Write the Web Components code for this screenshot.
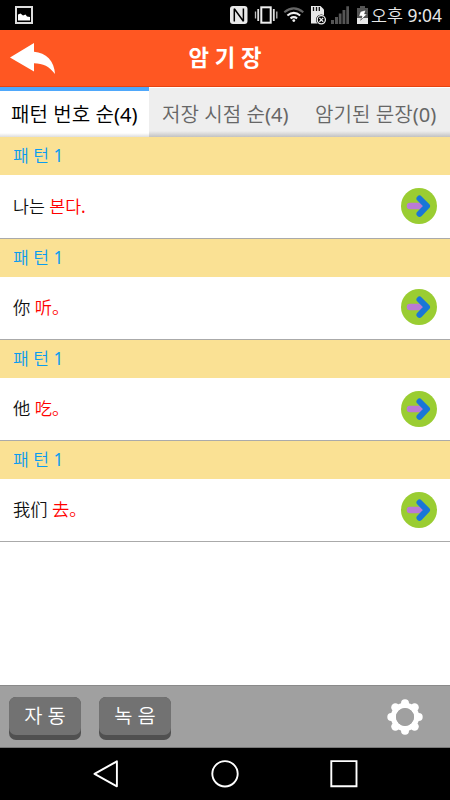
<!DOCTYPE html>
<html lang="ko">
<head>
<meta charset="utf-8">
<meta name="viewport" content="width=device-width, initial-scale=1">
<title>암기장</title>
<style>
  html, body {
    margin: 0;
    height: 100%;
  }

  body {
    background: #fff;
    font-family: "Noto Sans", "Noto Sans CJK KR DemiLight", "Noto Sans CJK KR", sans-serif;
    overflow: hidden;
  }
</style>
</head>
<body>
<memo-app></memo-app>

<script>
const attachTemplate = (host, html) => {
  const template = document.createElement('template');
  template.innerHTML = html;
  host.attachShadow({mode: 'open'}).appendChild(template.content.cloneNode(true));
};

class StatusBar extends HTMLElement {
  constructor() {
    super();
    attachTemplate(this, `
    <style>
      :host {
        display: flex;
        align-items: center;
        height: 30px;
        background: #000;
        color: #e8e8e8;
        flex: none;
      }

      svg {
        display: block;
        flex: none;
      }

      .picture {
        margin: 0 auto 0 15px;
      }

      span {
        font-size: 17.4px;
        line-height: 30px;
        white-space: nowrap;
        margin-left: 2px;
        margin-right: 8px;
      }
    </style>
    <svg class="picture" width="18" height="18" viewBox="0 0 18 18">
      <path d="M1 1H17V17H1Z" fill="none" stroke="#ddd" stroke-width="2"/>
      <path d="M3 14.5V8.5L5.5 7.5L8 9.5L10.5 8.5L12 10.5L15 11V14.5Z" fill="#fff"/>
    </svg>
    <svg width="139" height="22" viewBox="230 4 139 22">
      <rect x="230" y="6" width="17.5" height="18" rx="3" fill="#e8e8e8"/>
      <path d="M234.3 21.5V8.7L243.4 21.3V8.5" fill="none" stroke="#000" stroke-width="1.5" stroke-linejoin="bevel"/>
      <rect x="261.3" y="7.3" width="9.4" height="15.4" fill="none" stroke="#eee" stroke-width="2"/>
      <path d="M258.2 9V21M273.8 9V21" stroke="#ddd" stroke-width="1.8"/>
      <path d="M255.5 11.5V18.5M276.8 11.5V18.5" stroke="#bbb" stroke-width="1.3"/>
      <g fill="none" stroke-width="2.1">
        <path d="M284.3 12.2Q293.8 4.4 303.3 12.2" stroke="#666"/>
        <path d="M287.4 15.5Q293.8 10.3 300.2 15.5" stroke="#eee"/>
        <path d="M290.5 18.4Q293.8 15.9 297.1 18.4" stroke="#eee"/>
      </g>
      <circle cx="293.8" cy="20.6" r="1.4" fill="#eee"/>
      <path d="M311 6H320.5L324 9.5V23.5H311Z" fill="#e8e8e8"/>
      <path d="M313.5 7V11M316.5 7V11M319.3 7V11" stroke="#111" stroke-width="1.3"/>
      <circle cx="321.3" cy="19.8" r="5.3" fill="#000"/>
      <circle cx="321.3" cy="19.8" r="4.1" fill="none" stroke="#eee" stroke-width="1.3"/>
      <path d="M319.4 17.9L323.2 21.7M323.2 17.9L319.4 21.7" stroke="#eee" stroke-width="1.3"/>
      <path d="M331 20H334V24H331ZM335 17H338V24H335ZM338.8 13.5H341.5V24H338.8ZM342.5 10H345.3V24H342.5ZM346.3 6.2H349V24H346.3Z" fill="#555"/>
      <path d="M357 8H360V6H365V8H368V18H357Z" fill="#555"/>
      <path d="M357 18H368V24H357Z" fill="#e8e8e8"/>
      <path d="M360.5 11.5L365.8 10L364.6 14H367.3L360.6 20.3L362 16.2H358.7Z" fill="#fff" stroke="#222" stroke-width=".5"/>
    </svg>
    <span><slot></slot></span>
    `);
  }
}

class TitleBar extends HTMLElement {
  constructor() {
    super();
    attachTemplate(this, `
    <style>
      :host {
        display: grid;
        grid-template-columns: 1fr auto 1fr;
        align-items: center;
        box-sizing: border-box;
        height: 57px;
        background: #ff5722;
        border-bottom: 1px solid #e64310;
        color: #fff;
        flex: none;
      }

      svg {
        display: block;
        margin-left: 9px;
      }

      h1 {
        margin: 0;
        font-family: "Noto Sans", "Noto Sans CJK KR", sans-serif;
        font-size: 22.3px;
        font-weight: 700;
        line-height: 30px;
        white-space: nowrap;
      }
    </style>
    <svg width="48" height="34" viewBox="0 0 48 34">
      <path d="M1 16.5L25 2V10.7C37 11.5 45.5 20 46 33C40.5 25.5 34 22.2 25 22.2V30.5Z" fill="#fff"/>
    </svg>
    <h1><slot></slot></h1>
    `);
  }
}

class MemoTab extends HTMLElement {
  constructor() {
    super();
    attachTemplate(this, `
    <style>
      :host {
        display: block;
        box-sizing: border-box;
        height: 50.4px;
        padding: 5px 12px 0 13px;
        border-top: 1px solid #fff;
        background: linear-gradient(#eee 43px, #bbb 50px);
        color: #666;
        font-size: 20.1px;
        line-height: 43px;
        white-space: nowrap;
      }

      :host([selected]) {
        padding: 2px 11px 0 11px;
        border-top: 4px solid #4fa8fb;
        background: linear-gradient(#fff 42px, #ccc 48px);
        color: #000;
      }
    </style>
    <slot></slot>
    `);
  }
}

class PatternCard extends HTMLElement {
  constructor() {
    super();
    attachTemplate(this, `
    <style>
      :host {
        display: flex;
        flex-direction: column;
        height: 101.25px;
        flex: none;
      }

      :host([lang="zh-CN"]) .sentence {
        font-family: "Noto Sans", "Noto Sans CJK SC DemiLight", "Noto Sans CJK SC", sans-serif;
      }

      header {
        height: 38px;
        padding-left: 13px;
        background: #fae194;
        color: #0a9cf0;
        font-size: 17.2px;
        line-height: 38px;
        white-space: nowrap;
      }

      .sentence {
        flex: 1;
        display: flex;
        align-items: center;
        justify-content: space-between;
        padding: 0 13px;
        border-bottom: 1px solid #aaa;
        color: #111;
        font-size: 17.3px;
        white-space: nowrap;
      }

      .sentence span {
        line-height: 24px;
      }

      ::slotted(em) {
        color: #f00;
        font-style: normal;
      }

      svg {
        display: block;
        margin-bottom: 1px;
      }
    </style>
    <header><slot name="pattern"></slot></header>
    <div class="sentence">
      <span><slot></slot></span>
      <svg width="36" height="36" viewBox="0 0 36 36">
        <circle cx="18" cy="18" r="18" fill="#9acd32"/>
        <path d="M9 18H20" stroke="#ba7ad6" stroke-width="6.5" stroke-linecap="round"/>
        <path d="M18.5 10.5L26 18L18.5 25.8" fill="none" stroke="#1976d8" stroke-width="6" stroke-linecap="round" stroke-linejoin="round"/>
      </svg>
    </div>
    `);
  }
}

class PushButton extends HTMLElement {
  constructor() {
    super();
    attachTemplate(this, `
    <style>
      :host {
        display: block;
        border-radius: 7px;
        background: #505050;
        padding-bottom: 5px;
      }

      button {
        display: block;
        width: 72px;
        height: 37.5px;
        margin: 0;
        padding: 0 0 1px;
        border: 0;
        border-radius: 7px;
        background: #727272;
        color: #fff;
        font: inherit;
        font-size: 19.8px;
        line-height: 36px;
      }
    </style>
    <button><slot></slot></button>
    `);
  }
}

class ToolBar extends HTMLElement {
  constructor() {
    super();
    attachTemplate(this, `
    <style>
      :host {
        display: flex;
        align-items: center;
        gap: 18px;
        box-sizing: border-box;
        height: 63px;
        padding: 4px 27px 0 9px;
        background: #a0a0a0;
        border-top: 1px solid #8a8a8a;
        border-bottom: 1px solid #777;
        flex: none;
      }

      svg {
        display: block;
        margin: 0 0 3px auto;
      }
    </style>
    <slot></slot>
    <svg width="36" height="36" viewBox="-18 -18 36 36">
      <circle r="11.6" fill="none" stroke="#fff" stroke-width="5.2"/>
      <g fill="#fff">
        <circle cy="-13.7" r="4"/><circle cy="13.7" r="4"/>
        <circle cx="-13.7" r="4"/><circle cx="13.7" r="4"/>
        <circle cx="-9.6" cy="-9.6" r="4.2"/><circle cx="9.6" cy="-9.6" r="4.2"/>
        <circle cx="-9.6" cy="9.6" r="4.2"/><circle cx="9.6" cy="9.6" r="4.2"/>
      </g>
      <circle r="9" fill="#a0a0a0"/>
    </svg>
    `);
  }
}

class NavBar extends HTMLElement {
  constructor() {
    super();
    attachTemplate(this, `
    <style>
      :host {
        display: flex;
        align-items: center;
        justify-content: center;
        gap: 91px;
        height: 52px;
        background: #000;
        flex: none;
      }

      svg {
        display: block;
        fill: none;
        stroke: #fff;
        stroke-width: 1.9;
      }
    </style>
    <svg width="28" height="28" viewBox="0 0 28 28"><path d="M24.9 1.3V26.3L2.5 13.8Z" stroke-linejoin="round"/></svg>
    <svg width="28" height="28" viewBox="0 0 28 28"><circle cx="14" cy="13.8" r="12.7"/></svg>
    <svg width="28" height="28" viewBox="0 0 28 28"><path d="M1.3 1.1H26.5V26.3H1.3Z"/></svg>
    `);
  }
}

class MemoApp extends HTMLElement {
  constructor() {
    super();
    attachTemplate(this, `
    <style>
      :host {
        display: flex;
        flex-direction: column;
        width: 450px;
        height: 800px;
        background: #fff;
      }

      nav {
        display: grid;
        grid-template-columns: 149px 153px 148px;
        flex: none;
      }

      main {
        flex: 1;
        min-height: 0;
        display: flex;
        flex-direction: column;
      }
    </style>
    <status-bar>오후 9:04</status-bar>
    <title-bar>암 기 장</title-bar>
    <nav>
      <memo-tab selected>패턴 번호 순(4)</memo-tab>
      <memo-tab>저장 시점 순(4)</memo-tab>
      <memo-tab>암기된 문장(0)</memo-tab>
    </nav>
    <main>
      <pattern-card><span slot="pattern">패 턴 1</span>나는 <em>본다.</em></pattern-card>
      <pattern-card lang="zh-CN"><span slot="pattern" lang="ko">패 턴 1</span>你 <em>听。</em></pattern-card>
      <pattern-card lang="zh-CN"><span slot="pattern" lang="ko">패 턴 1</span>他 <em>吃。</em></pattern-card>
      <pattern-card lang="zh-CN"><span slot="pattern" lang="ko">패 턴 1</span>我们 <em>去。</em></pattern-card>
    </main>
    <tool-bar>
      <push-button>자 동</push-button>
      <push-button>녹 음</push-button>
    </tool-bar>
    <nav-bar></nav-bar>
    `);
  }
}

customElements.define('status-bar', StatusBar);
customElements.define('title-bar', TitleBar);
customElements.define('memo-tab', MemoTab);
customElements.define('pattern-card', PatternCard);
customElements.define('push-button', PushButton);
customElements.define('tool-bar', ToolBar);
customElements.define('nav-bar', NavBar);
customElements.define('memo-app', MemoApp);
</script>
</body>
</html>
